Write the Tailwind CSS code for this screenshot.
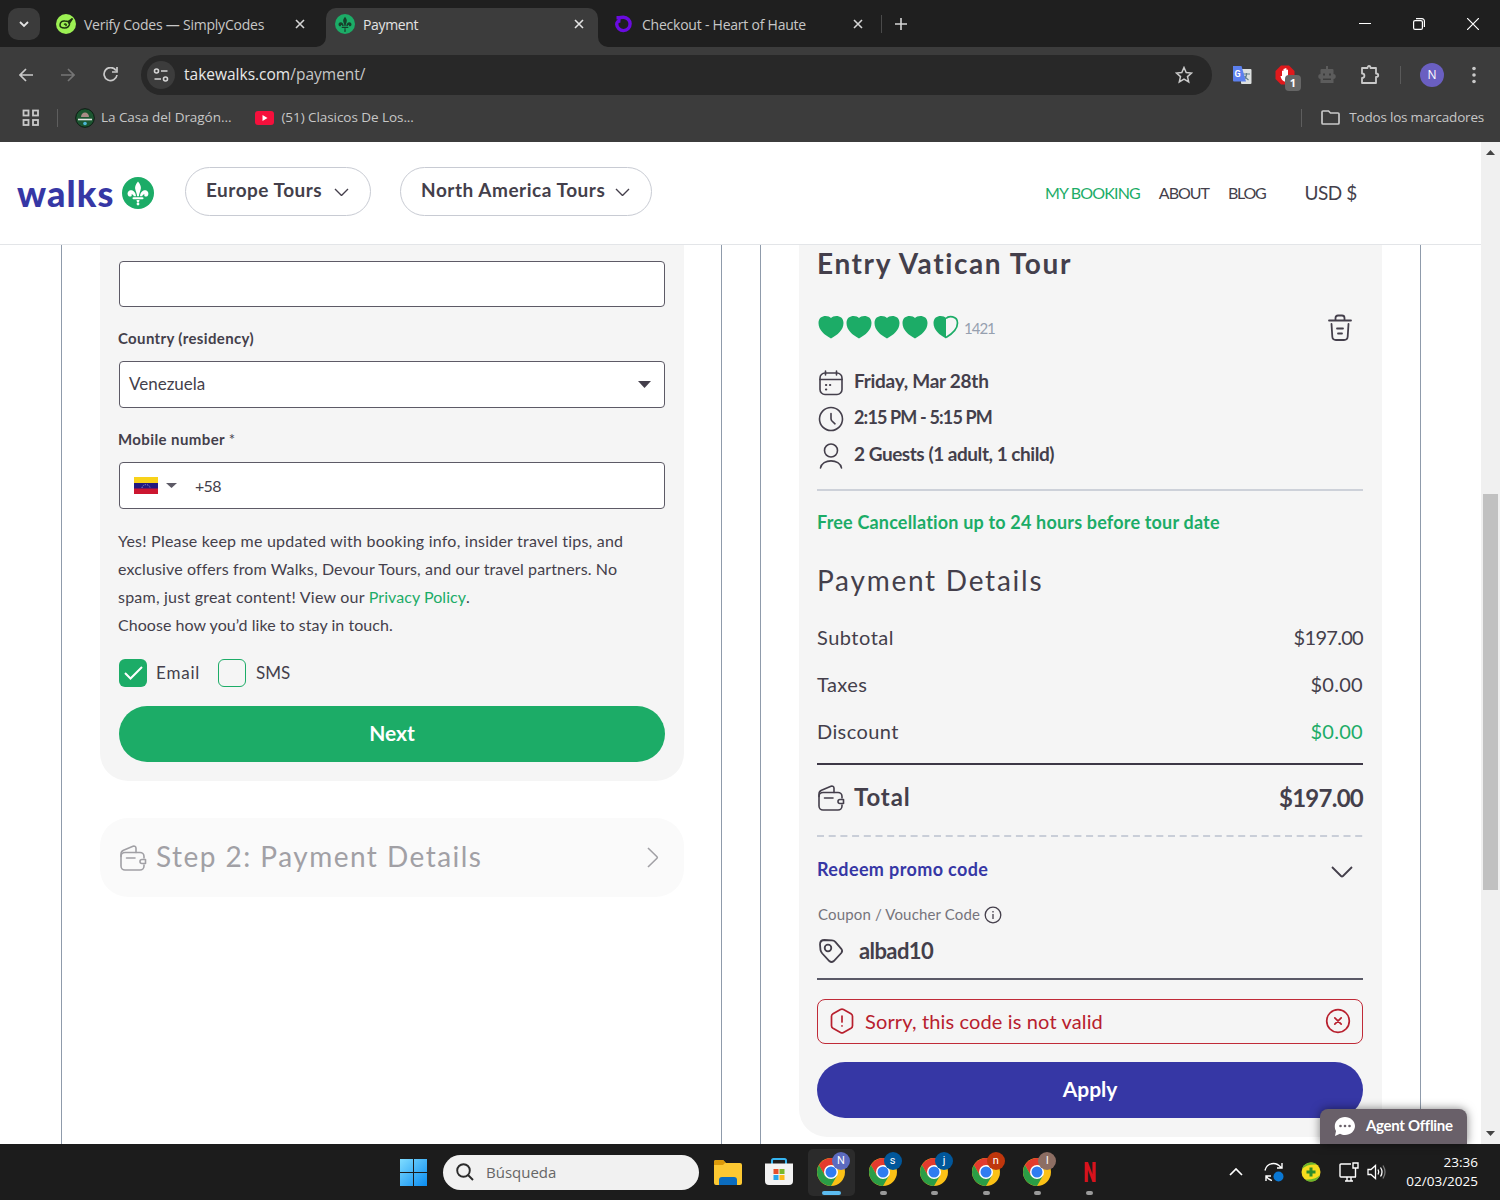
<!DOCTYPE html>
<html lang="en">

<head>
    <meta charset="UTF-8">
    <meta name="viewport" content="width=device-width, initial-scale=1.0">
    <title>Payment</title>
    <script src="https://cdn.jsdelivr.net/npm/@tailwindcss/browser@4"></script>
</head>

<body class="w-[1500px] h-[1200px] overflow-hidden flex flex-col bg-white font-['Open_Sans','Noto_Sans',sans-serif]">

    <!-- Shared icons -->
    <svg class="hidden">
        <symbol id="fleur" viewBox="0 0 32 32">
            <path d="M16 4.500c-2.600 3.200-3.600 5.600-2.500 8.700.7 2 1.400 3.700 1.600 6h1.800c.2-2.300.9-4 1.600-6 1.100-3.100.1-5.500-2.500-8.700z" />
            <path d="M14 19.200c-.3-3.600-2.300-6-4.900-6-2.300 0-3.900 2-3.400 4.200.4 1.700 1.900 2.500 3.300 2.100.9-.3 1-1.300.3-1.700.8-.9 2.200-.2 2.400 1.400zM18 19.200c.3-3.600 2.300-6 4.900-6 2.300 0 3.900 2 3.400 4.200-.4 1.700-1.900 2.500-3.300 2.100-.9-.3-1-1.300-.3-1.700-.8-.9-2.200-.2-2.400 1.400z" />
            <rect x="10.500" y="20.200" width="11" height="2" rx="1" />
            <path d="M14.500 23h3l-.5 2.200h-2z" />
            <circle cx="16" cy="27" r="1.400" />
        </symbol>
        <symbol id="heart" viewBox="0 0 28 26">
            <path d="M14 4C11.500.8 1.500.4 1.500 9c0 7 6 12 12.500 15.500C20.500 21 26.500 16 26.500 9 26.500.4 16.500.8 14 4z" />
        </symbol>
        <symbol id="wallet" viewBox="0 0 28 28">
            <g fill="none" stroke="currentColor" stroke-width="1.600" stroke-linecap="round" stroke-linejoin="round">
                <path d="M25 14v-1.500a4 4 0 0 0-4-4H6a4 4 0 0 0-4 4V22a4 4 0 0 0 4 4h15a4 4 0 0 0 4-4v-1" />
                <path d="M2 12.500V10c0-2 .8-3 2.500-3.800L14 2.300c1.500-.6 3 .3 3 2V8.500M7.500 14H16" />
                <path d="M26.500 15.500v4h-3.500a2 2 0 0 1 0-4z" />
            </g>
        </symbol>
        <symbol id="chrome" viewBox="0 0 28 28">
            <circle cx="14" cy="14" r="14" fill="#fbc116" />
            <path d="M1.880 7 7.940 17.500 14 14 14 7 26.120 7A14 14 0 0 0 1.880 7z" fill="#e33b2e" />
            <path d="M1.880 7A14 14 0 0 0 14 28l6.060-10.500L14 14l-6.060 3.500z" fill="#2a9d46" />
            <circle cx="14" cy="14" r="7" fill="#fff" />
            <circle cx="14" cy="14" r="5.500" fill="#2f7cf0" />
        </symbol>
        <symbol id="x" viewBox="0 0 10 10">
            <path d="M1 1l8 8M9 1L1 9" fill="none" stroke="currentColor" stroke-width="1.600" />
        </symbol>
    </svg>

    <!-- Tab strip -->
    <div class="h-[47px] shrink-0 bg-[#1f1f1f] flex items-end text-[14px] text-[#c7c7c7]">
        <div class="ml-2 mb-[7px] size-8 rounded-[10px] bg-[#3b3b3b] flex items-center justify-center">
            <svg class="w-[10px] h-[7px]" viewBox="0 0 10 7" fill="none" stroke="#e3e3e3" stroke-width="1.800"><path d="M1 1l4 4 4-4" /></svg>
        </div>
        <div class="h-[39px] w-[286px] pl-4 pr-[21px] pb-[7px] flex items-center">
            <svg class="size-5 shrink-0" viewBox="0 0 20 20"><circle cx="10" cy="10" r="10" fill="#9cf053" /><path d="M4 11c0-3 2.500-4.500 5-4l3 .5 4.500-3-3 4.500c.5 3-2 5-5 5S4 13.500 4 11zM8 10.500c2-1.500 3 .5 1.500 1.500M12 9l2-1" fill="none" stroke="#1e3310" stroke-width="1.500" /></svg>
            <span class="ml-2 whitespace-nowrap tracking-[-0.23px]">Verify Codes — SimplyCodes</span>
            <svg class="ml-auto size-[10px] text-[#d5d5d5]"><use href="#x" /></svg>
        </div>
        <div class="relative h-[39px] w-[272px] pl-[9px] pr-[14px] pb-[7px] rounded-t-[10px] bg-[#3c3c3c] text-[#e3e3e3] flex items-center">
            <svg class="absolute left-[-10px] bottom-0 size-[10px]" viewBox="0 0 10 10"><path d="M10 0v10H0A10 10 0 0 0 10 0z" fill="#3c3c3c" /></svg>
            <svg class="absolute right-[-10px] bottom-0 size-[10px]" viewBox="0 0 10 10"><path d="M0 0v10h10A10 10 0 0 1 0 0z" fill="#3c3c3c" /></svg>
            <svg class="size-5 shrink-0" viewBox="0 0 32 32"><circle cx="16" cy="16" r="16" fill="#1cac67" /><use href="#fleur" fill="#17402c" /></svg>
            <span class="ml-2 whitespace-nowrap tracking-[-0.35px]">Payment</span>
            <svg class="ml-auto size-[10px]"><use href="#x" /></svg>
        </div>
        <div class="h-[39px] w-[283px] pl-[17px] pr-[18px] pb-[7px] flex items-center">
            <svg class="size-[18px] shrink-0" viewBox="0 0 18 18" fill="none" stroke="#6a0be0" stroke-width="3.400"><path d="M1.500 2.700h3q1.500-.5 4-.5a6.700 6.700 0 1 1-6.800 7c0-2.200 1.300-3.500 3.800-3.200" /></svg>
            <span class="ml-[9px] whitespace-nowrap tracking-[-0.23px]">Checkout - Heart of Haute</span>
            <svg class="ml-auto size-[10px] text-[#d5d5d5]"><use href="#x" /></svg>
        </div>
        <div class="w-px h-[18px] mb-[14px] bg-[#4a4a4a]"></div>
        <svg class="ml-[13px] mb-[17px] size-3" viewBox="0 0 12 12" stroke="#d5d5d5" stroke-width="1.600"><path d="M6 0v12M0 6h12" /></svg>
        <div class="ml-auto mr-[21px] mb-[17px] flex items-center gap-[42px] text-white">
            <svg class="w-3 h-3" viewBox="0 0 12 12" stroke="#fff" stroke-width="1"><path d="M0 5.500h12" /></svg>
            <svg class="size-3" viewBox="0 0 12 12" fill="none" stroke="#fff" stroke-width="1.200"><rect x=".6" y="2.600" width="8.800" height="8.800" rx="1.500" /><path d="M3 .6h6a2.400 2.400 0 0 1 2.400 2.400v6" /></svg>
            <svg class="size-3" viewBox="0 0 12 12" stroke="#fff" stroke-width="1.200"><path d="M0 0l12 12M12 0L0 12" /></svg>
        </div>
    </div>

    <!-- Toolbar -->
    <div class="h-[55px] shrink-0 bg-[#3c3c3c] flex items-center pl-[19px] pr-[24px] text-[#c7c7c7]">
        <svg class="w-[14px] h-[14px]" viewBox="0 0 14 14" fill="none" stroke="#c9c9c9" stroke-width="1.700"><path d="M14 7H1M7 1L1 7l6 6" /></svg>
        <svg class="ml-7 w-[14px] h-[14px]" viewBox="0 0 14 14" fill="none" stroke="#757575" stroke-width="1.700"><path d="M0 7h13M7 1l6 6-6 6" /></svg>
        <svg class="ml-7 w-[15px] h-[15px]" viewBox="0 0 15 15" fill="none" stroke="#c9c9c9" stroke-width="1.700"><path d="M13 3.500A6.500 6.500 0 1 0 14 8M14 0v5H9" /></svg>
        <div class="ml-[23px] w-[1071px] h-10 rounded-full bg-[#282828] flex items-center pl-[6px] pr-[19px]">
            <div class="size-7 rounded-full bg-[#3c3c3c] flex items-center justify-center">
                <svg class="w-4 h-[14px]" viewBox="0 0 16 14" fill="none" stroke="#d5d5d5" stroke-width="1.600"><circle cx="3.500" cy="3" r="2" /><path d="M8 3h6.500M1.500 11H8" /><circle cx="12.500" cy="11" r="2" /></svg>
            </div>
            <span class="ml-[9px] text-[15.5px] text-[#c7c7c7] whitespace-nowrap"><span class="text-[#e8e8e8]">takewalks.com</span>/payment/</span>
            <svg class="ml-auto size-[18px]" viewBox="0 0 18 18" fill="none" stroke="#c9c9c9" stroke-width="1.500"><path d="M9 1.500l2.200 5 5.300.5-4 3.600 1.200 5.300L9 13.100l-4.700 2.800 1.200-5.300-4-3.600 5.300-.5z" /></svg>
        </div>
        <svg class="ml-[20px] size-5" viewBox="0 0 20 20"><rect x="9" y="4" width="10.500" height="15" rx="1" fill="#dde0e0" /><path d="M11 9h7M14.500 8v1.500c0 3-3 5-3 5M12.500 11c1 2 4 4 4 4" stroke="#607d8b" stroke-width="1.200" fill="none" /><path d="M1 1h8.500l4.500 15.500H2a1 1 0 0 1-1-1z" fill="#5c80ee" /><text x="2.500" y="12" font-size="9" font-weight="700" fill="#fff" font-family="Roboto">G</text></svg>
        <div class="relative ml-[23px] w-5 h-5">
            <svg class="size-5" viewBox="0 0 20 20"><path d="M6 .5h8L19.500 6v8L14 19.500H6L.5 14V6z" fill="#e0191c" /><path d="M7 11V6q1-1 1.500 0V4q1-1 1.500 0V3.500q1-1 1.500 0V5q1-1 1.500 0v7c0 3-1 4.500-3 4.500S6 14 5.500 11z" fill="#fff" /></svg>
            <span class="absolute left-[10px] top-[10px] w-4 h-4 rounded-[4px] bg-[#666] text-white text-[11px] leading-4 font-bold text-center">1</span>
        </div>
        <svg class="ml-[22px] w-5 h-5" viewBox="0 0 20 20" fill="#5c5c5c"><path d="M9 1h2v3h4.500a1 1 0 0 1 1 1v4c3 0 3 5 0 5v4h-13v-4c-3 0-3-5 0-5V5a1 1 0 0 1 1-1H9z" /><path d="M6 8.500h2v2H6zM12 8.500h2v2h-2zM6 13.500h8V15H6z" fill="#3c3c3c" /></svg>
        <svg class="ml-[23px] w-5 h-5" viewBox="0 0 20 20" fill="none" stroke="#c9c9c9" stroke-width="1.800"><path d="M2 3h5.500c0-2.700 3-2.700 3 0H16v5.500c3 0 3 3.500 0 3.500v6H2v-5c3.200 0 3.200-4.500 0-4.500z" stroke-linejoin="round" /></svg>
        <div class="ml-5 w-px h-[18px] bg-[#5a5a5a]"></div>
        <div class="ml-[19px] size-6 rounded-full bg-[#6a5fc1] text-white text-[12px] flex items-center justify-center">N</div>
        <svg class="ml-auto w-[4px] h-[18px]" viewBox="0 0 4 18" fill="#c9c9c9"><circle cx="2" cy="2.500" r="1.800" /><circle cx="2" cy="9" r="1.800" /><circle cx="2" cy="15.500" r="1.800" /></svg>
    </div>

    <!-- Bookmarks -->
    <div class="h-10 shrink-0 bg-[#3c3c3c] flex items-center pb-[9px] pl-[22px] pr-4 text-[13.5px] text-[#c7c7c7] whitespace-nowrap">
        <svg class="size-[18px]" viewBox="0 0 18 18" fill="none" stroke="#c9c9c9" stroke-width="1.800"><rect x="1.500" y="1.500" width="5" height="5" /><rect x="11" y="1.500" width="5" height="5" /><rect x="1.500" y="11" width="5" height="5" /><rect x="11" y="11" width="5" height="5" /></svg>
        <div class="ml-[17px] w-px h-[18px] bg-[#5e5e5e]"></div>
        <svg class="ml-[17px] size-5" viewBox="0 0 20 20"><circle cx="10" cy="10" r="9.300" fill="#1c5530" stroke="#0c1c12" /><path d="M6 9c0-6 8-6 8 0z" fill="#a98b86" /><path d="M3 11.500h14" stroke="#e5e5e5" stroke-width="1.600" /><circle cx="10" cy="15.500" r="1.800" fill="#4db8d8" /></svg>
        <span class="ml-[6px] tracking-[-0.05px]">La Casa del Dragón...</span>
        <svg class="ml-[24px] w-[19px] h-[14px]" viewBox="0 0 19 14"><rect width="19" height="14" rx="3" fill="#f5103c" /><path d="M7.500 4v6l5-3z" fill="#fff" /></svg>
        <span class="ml-[7px] tracking-[-0.06px]">(51) Clasicos De Los...</span>
        <div class="ml-auto w-px h-[18px] bg-[#5e5e5e]"></div>
        <svg class="ml-[19px] w-[19px] h-[15px]" viewBox="0 0 19 15" fill="none" stroke="#c9c9c9" stroke-width="1.700"><path d="M1 2.500V13c0 .6.400 1 1 1h15c.6 0 1-.4 1-1V4c0-.6-.4-1-1-1H9.500l-2-2H2c-.6 0-1 .4-1 1z" /></svg>
        <span class="ml-[9px] tracking-[-0.2px]">Todos los marcadores</span>
    </div>

    <!-- Page -->
    <div class="relative h-[1002px] shrink-0 flex font-['Lato',sans-serif] text-[#443f4b]">
        <div class="w-[1481px] flex flex-col">
            <header class="h-[103px] shrink-0 border-b border-[#e3e5e8] flex items-center pl-[17px] pr-[124px]">
                <span class="w-[98px] text-[36px] leading-none font-black tracking-[1.1px] text-[#3637a5]">walks</span>
                <svg class="ml-[7px] size-[32px]" viewBox="0 0 32 32"><circle cx="16" cy="16" r="16" fill="#1cac67" /><use href="#fleur" fill="#fff" /></svg>
                <div class="ml-[31px] mb-[3px] w-[186px] h-[49px] rounded-full border border-[#c8cbd3] flex items-center pl-5 pr-[21px] pb-[2px]">
                    <span class="text-[19px] font-bold whitespace-nowrap tracking-[0.5px]">Europe Tours</span>
                    <svg class="ml-auto mt-[3px] w-[15px] h-[9px]" viewBox="0 0 15 9" fill="none" stroke="#443f4b" stroke-width="1.400"><path d="M1 1l6 6q.5.500 1 0l6-6" /></svg>
                </div>
                <div class="ml-[29px] mb-[3px] w-[252px] h-[49px] rounded-full border border-[#c8cbd3] flex items-center pl-5 pr-[21px] pb-[2px]">
                    <span class="text-[19px] font-bold whitespace-nowrap tracking-[0.53px]">North America Tours</span>
                    <svg class="ml-auto mt-[3px] w-[15px] h-[9px]" viewBox="0 0 15 9" fill="none" stroke="#443f4b" stroke-width="1.400"><path d="M1 1l6 6q.5.500 1 0l6-6" /></svg>
                </div>
                <nav class="ml-auto flex items-center text-[16px] whitespace-nowrap">
                    <a class="text-[#1cac67] tracking-[-0.85px]">MY BOOKING</a>
                    <a class="ml-[19px] tracking-[-1px]">ABOUT</a>
                    <a class="ml-[19px] tracking-[-1.3px]">BLOG</a>
                    <a class="ml-[39px] text-[19px] tracking-[-0.4px]">USD $</a>
                </nav>
            </header>

            <main class="flex-1 flex pl-[61px] gap-[38px]">
                <!-- Traveler form -->
                <section class="w-[661px] border-x border-[#8f9bab] pl-[38px] pr-[37px]">
                    <div class="h-[536px] rounded-b-[28px] bg-[#f5f5f5] pl-[19px] pr-[19px] pt-[16px] flex flex-col">
                        <div class="h-[46px] shrink-0 rounded-[4px] border border-[#5d5a66] bg-white"></div>
                        <label class="-ml-px h-[54px] shrink-0 pt-[21px] text-[15px] leading-5 font-bold tracking-[0.35px]">Country (residency)</label>
                        <div class="h-[47px] shrink-0 rounded-[4px] border border-[#5d5a66] bg-white flex items-center pl-[9px] pr-[13px] pb-px text-[17px]">
                            <span>Venezuela</span>
                            <svg class="ml-auto w-[13px] h-[7px]" viewBox="0 0 13 7" fill="#443f4b"><path d="M0 0h13L6.500 7z" /></svg>
                        </div>
                        <label class="-ml-px h-[54px] shrink-0 pt-[21px] text-[15px] leading-5 font-bold tracking-[0.4px]">Mobile number <span class="font-normal">*</span></label>
                        <div class="h-[47px] shrink-0 rounded-[4px] border border-[#5d5a66] bg-white flex items-center pl-[14px] text-[16px]">
                            <svg class="w-6 h-[17px]" viewBox="0 0 24 17"><path fill="#f8d21a" d="M0 0h24v6H0z" /><path fill="#22197f" d="M0 6h24v6H0z" /><path fill="#cc1630" d="M0 11.500h24V17H0z" /><path d="M8 11c0-4.500 8-4.500 8 0" fill="none" stroke="#8f8fd0" stroke-width=".9" stroke-dasharray="1.200 1" /></svg>
                            <svg class="ml-2 w-[11px] h-[5px]" viewBox="0 0 11 5" fill="#5d5a66"><path d="M0 0h11L5.500 5z" /></svg>
                            <span class="ml-[18px] tracking-[-0.7px] pt-px">+58</span>
                        </div>
                        <p class="mt-[18px] -ml-px text-[16px] leading-7 whitespace-nowrap">
                            <span class="tracking-[0.22px]">Yes! Please keep me updated with booking info, insider travel tips, and</span><br>
                            <span class="tracking-[0.13px]">exclusive offers from Walks, Devour Tours, and our travel partners. No</span><br>
                            <span class="tracking-[0.22px]">spam, just great content! View our </span><a class="text-[#1cac67] tracking-[0.06px]">Privacy Policy</a>.<br>
                            <span class="tracking-[0.05px]">Choose how you’d like to stay in touch.</span>
                        </p>
                        <div class="mt-[20px] h-7 flex items-center text-[17px]">
                            <div class="size-7 rounded-[6px] bg-[#1cac67] flex items-center justify-center">
                                <svg class="w-[19px] h-[14px]" viewBox="0 0 19 14" fill="none" stroke="#fff" stroke-width="2"><path d="M1 7l5.500 5.500L18 1" /></svg>
                            </div>
                            <span class="ml-[9px] tracking-[0.8px]">Email</span>
                            <div class="ml-[18px] size-7 rounded-[6px] border border-[#1cac67]"></div>
                            <span class="ml-[10px]">SMS</span>
                        </div>
                        <button class="mt-[19px] h-14 shrink-0 rounded-full bg-[#1cac67] text-white text-[21px] font-bold pb-[3px]">Next</button>
                    </div>
                    <div class="mt-[37px] h-[79px] rounded-[28px] bg-[#fafafa] text-[#a1a0a5] flex items-center pl-[19px] pr-[25px]">
                        <svg class="size-7"><use href="#wallet" /></svg>
                        <span class="ml-[9px] pb-[3px] text-[28px] tracking-[1.47px]">Step 2: Payment Details</span>
                        <svg class="ml-auto w-[12px] h-[21px]" viewBox="0 0 12 21" fill="none" stroke="currentColor" stroke-width="1.600"><path d="M1 1l9 8.800q.7.700 0 1.400L1 20" /></svg>
                    </div>
                </section>

                <!-- Order summary -->
                <section class="w-[661px] border-x border-[#8f9bab] px-[38px]">
                    <div class="h-[892px] rounded-b-[28px] bg-[#f5f5f5] pl-[18px] pr-[19px] flex flex-col">
                        <h2 class="h-[37px] text-[28px] leading-[36px] font-bold tracking-[1.6px]">Entry Vatican Tour</h2>
                        <div class="mt-[27px] h-9 flex items-center">
                            <svg class="w-7 h-[26px] text-[#1cac67]" fill="currentColor"><use href="#heart" /></svg>
                            <svg class="w-7 h-[26px] text-[#1cac67]" fill="currentColor"><use href="#heart" /></svg>
                            <svg class="w-7 h-[26px] text-[#1cac67]" fill="currentColor"><use href="#heart" /></svg>
                            <svg class="w-7 h-[26px] text-[#1cac67]" fill="currentColor"><use href="#heart" /></svg>
                            <svg class="ml-[3px] w-7 h-[26px]" viewBox="0 0 28 26"><path d="M14 4C11.500.8 1.500.4 1.500 9c0 7 6 12 12.500 15.500z" fill="#1cac67" /><path d="M14 4.500C16.500 1.500 25.500 1.500 25.500 9c0 6.500-5.500 11-11.500 14.500" fill="none" stroke="#1cac67" stroke-width="1.700" /></svg>
                            <span class="ml-[4px] pt-[2px] text-[15px] tracking-[-1px] text-[#96a0af]">1421</span>
                            <svg class="ml-auto mr-[11px] w-6 h-[27px]" viewBox="0 0 24 27" fill="none" stroke="#443f4b" stroke-width="1.800" stroke-linecap="round"><path d="M1 6.500h22M7.500 6V4q0-2.500 2.500-2.500h4q2.500 0 2.500 2.500v2M3.500 10l.8 12.500Q4.500 26 8 26h8q3.500 0 3.700-3.500L20.500 10M9 14.500h6M10 19.500h4" /></svg>
                        </div>
                        <div class="mt-[18px] flex flex-col text-[19px] font-bold">
                            <div class="h-[36.5px] flex items-center">
                                <svg class="size-7 mt-[4px]" viewBox="0 0 28 28" fill="none" stroke="#443f4b" stroke-width="1.600" stroke-linecap="round"><rect x="3" y="4" width="22" height="21.500" rx="5" /><path d="M3 10.500h22M8.500 2v4M19.500 2v4" /><path d="M9 16h.2M13 16h.2M9 20.500h.2" stroke-width="2.200" /></svg>
                                <span class="ml-[9px] tracking-[-0.27px]">Friday, Mar 28th</span>
                            </div>
                            <div class="h-[36.5px] flex items-center">
                                <svg class="size-7 mt-[3px]" viewBox="0 0 28 28" fill="none" stroke="#443f4b" stroke-width="1.600" stroke-linecap="round"><circle cx="14" cy="14" r="11.500" /><path d="M14 8.500v5q0 1.500 1 2.500l3 2.800" /></svg>
                                <span class="ml-[9px] text-[18px] tracking-[-0.85px]">2:15 PM - 5:15 PM</span>
                            </div>
                            <div class="h-[36.5px] flex items-center">
                                <svg class="size-7 mt-[4px]" viewBox="0 0 28 28" fill="none" stroke="#443f4b" stroke-width="1.600" stroke-linecap="round"><circle cx="14" cy="8.500" r="6.500" /><path d="M3.500 26c1.500-9.500 19.500-9.500 21 0" /></svg>
                                <span class="ml-[9px] tracking-[-0.46px]">2 Guests (1 adult, 1 child)</span>
                            </div>
                        </div>
                        <div class="mt-4 h-[2px] shrink-0 bg-[#cdd1d9]"></div>
                        <div class="mt-[17px] h-[28px] text-[18px] leading-[28px] font-bold tracking-[0.18px] text-[#1cac67]">Free Cancellation up to 24 hours before tour date</div>
                        <h3 class="mt-[25px] h-[40px] text-[28px] leading-[39px] tracking-[1.75px]">Payment Details</h3>
                        <div class="mt-[13px] flex flex-col text-[20px]">
                            <div class="h-[47px] flex items-center justify-between"><span class="tracking-[0.5px]">Subtotal</span><span class="tracking-[-0.7px]">$197.00</span></div>
                            <div class="h-[47px] flex items-center justify-between"><span class="tracking-[0.4px]">Taxes</span><span class="tracking-[0.3px]">$0.00</span></div>
                            <div class="h-[47px] flex items-center justify-between"><span class="tracking-[0.4px]">Discount</span><span class="tracking-[0.3px] text-[#1cac67]">$0.00</span></div>
                        </div>
                        <div class="mt-[8px] h-[2px] shrink-0 bg-[#3d3846]"></div>
                        <div class="h-[70px] pb-[3px] flex items-center text-[24px] font-bold">
                            <svg class="size-7"><use href="#wallet" /></svg>
                            <span class="ml-[9px] pb-[2px] tracking-[0.9px]">Total</span>
                            <span class="ml-auto pb-[1px] tracking-[-0.75px]">$197.00</span>
                        </div>
                        <svg class="h-[2px] w-full shrink-0"><path d="M0 1h546" stroke="#c9ced8" stroke-width="2" stroke-dasharray="7 4.700" /></svg>
                        <div class="mt-[15px] h-[36px] flex items-center text-[18px] font-bold text-[#3637a5]">
                            <span class="tracking-[0.37px]">Redeem promo code</span>
                            <svg class="ml-auto mr-[10px] mt-1 w-[22px] h-[12px]" viewBox="0 0 22 12" fill="none" stroke="#443f4b" stroke-width="1.800"><path d="M1 1l9 9q1 1 2 0l9-9" /></svg>
                        </div>
                        <div class="mt-[15px] pl-[1px] h-6 flex items-center text-[15px] text-[#76747c]">
                            <span class="tracking-[0.15px]">Coupon / Voucher Code</span>
                            <svg class="ml-1 size-[18px]" viewBox="0 0 18 18" fill="none" stroke="#443f4b" stroke-width="1.300"><circle cx="9" cy="9" r="7.800" /><path d="M9 8v5M9 5v1.500" /></svg>
                        </div>
                        <div class="h-[50px] flex items-center pb-[2px] text-[22px] font-bold">
                            <svg class="w-7 h-7" viewBox="0 0 28 28" fill="none" stroke="#443f4b" stroke-width="1.800"><path d="M3 7.500Q3 3 7.500 3l7.500.3q2 .1 3.300 1.500l6 7q1.700 2.200 0 4.200l-7.500 8q-2.300 2-4.500 0l-7-7.500Q4 15 3.500 13z" /><circle cx="11" cy="11" r="3.300" /></svg>
                            <span class="ml-[14px] tracking-[-0.6px]">albad10</span>
                        </div>
                        <div class="mt-[1px] h-[2px] shrink-0 bg-[#5a5967]"></div>
                        <div class="mt-[19px] h-[45px] shrink-0 rounded-[8px] border border-[#c02b38] text-[#b8202e] flex items-center px-[11px] text-[20px]">
                            <svg class="w-[26px] h-[26px]" viewBox="0 0 26 26" fill="none" stroke="currentColor" stroke-width="1.700" stroke-linecap="round"><path d="M11.500 1.500q1.500-.8 3 0l7.500 4.200q1.500.9 1.500 2.600v9.400q0 1.700-1.500 2.600l-7.500 4.200q-1.500.8-3 0L4 20.300q-1.500-.9-1.500-2.600V8.300q0-1.700 1.500-2.600zM13 8v6M13 17.800v.2" /></svg>
                            <span class="ml-[10px] pb-px tracking-[0.14px]">Sorry, this code is not valid</span>
                            <svg class="ml-auto size-[26px]" viewBox="0 0 26 26" fill="none" stroke="currentColor" stroke-width="1.700" stroke-linecap="round"><circle cx="13" cy="13" r="11.300" /><path d="M9.800 9.800l6.400 6.400M16.200 9.800l-6.400 6.400" /></svg>
                        </div>
                        <button class="mt-[18px] h-14 shrink-0 rounded-full bg-[#3637a5] text-white text-[21px] font-bold pb-[2px]">Apply</button>
                    </div>
                </section>
            </main>
        </div>

        <!-- Scrollbar -->
        <div class="w-[19px] bg-[#f0f0f0] flex flex-col items-center">
            <svg class="mt-2 w-[9px] h-[5px] shrink-0" viewBox="0 0 9 5" fill="#444"><path d="M0 5h9L4.500 0z" /></svg>
            <div class="mt-[339px] w-[15px] h-[396px] bg-[#c1c1c1]"></div>
            <svg class="mt-auto mb-2 w-[9px] h-[5px] shrink-0" viewBox="0 0 9 5" fill="#444"><path d="M0 0h9L4.500 5z" /></svg>
        </div>

        <!-- Chat widget -->
        <div class="absolute right-[33px] bottom-0 w-[147px] h-[35px] rounded-t-[8px] bg-[#696069] text-white shadow-[0_0_10px_rgba(0,0,0,0.5)] flex items-center pl-[14px] text-[15px] font-bold">
            <svg class="w-[21px] h-[19px]" viewBox="0 0 21 19"><path d="M11 0c5.500 0 10 4 10 9s-4.500 9-10 9c-2 0-3.500-.4-5-1.200L1 19l1-5C1 12.500.800 11 .8 9c0-5 4.700-9 10.200-9z" fill="#fff" /><g fill="#696069"><circle cx="6.500" cy="9" r="1.300" /><circle cx="11" cy="9" r="1.300" /><circle cx="15.500" cy="9" r="1.300" /></g></svg>
            <span class="ml-[11px] pb-[2px] whitespace-nowrap tracking-[-0.3px]">Agent Offline</span>
        </div>
    </div>

    <!-- Taskbar -->
    <div class="h-14 shrink-0 bg-[#1c1c1c] flex items-center pl-[400px] pr-[22px] text-white">
        <svg class="size-[27px] shrink-0" viewBox="0 0 27 27"><defs><linearGradient id="win" x1="0" y1="0" x2="1" y2="1"><stop stop-color="#7fdcff" /><stop offset="1" stop-color="#0a8cf0" /></linearGradient></defs><path d="M0 0h13v13H0zM14 0h13v13H14zM0 14h13v13H0zM14 14h13v13H14z" fill="url(#win)" /></svg>
        <div class="ml-4 w-[256px] h-[35px] rounded-full bg-[#f1f1f1] flex items-center pl-[13px] text-[15px] text-[#666]">
            <svg class="size-[18px]" viewBox="0 0 18 18" fill="none" stroke="#2b2b2b" stroke-width="1.900"><circle cx="7.500" cy="7.500" r="6.300" /><path d="M12 12l5 5" /></svg>
            <span class="ml-3">Búsqueda</span>
        </div>
        <svg class="ml-[15px] w-7 h-[25px]" viewBox="0 0 28 25"><path d="M0 2q0-2 2-2h7l3 3h14q2 0 2 2v18q0 2-2 2H2q-2 0-2-2z" fill="#fcc832" /><path d="M0 2q0-2 2-2h7l2.500 2.500L9 5H0z" fill="#dc9a0a" /><path d="M5 25v-5q0-3 3-3h12q3 0 3 3v5z" fill="#0b6cbf" /></svg>
        <svg class="ml-[23px] w-7 h-[28px]" viewBox="0 0 28 28"><path d="M7 6V2.500Q7 1 8.500 1h11Q21 1 21 2.500V6" fill="none" stroke="#35b4f0" stroke-width="2" /><path d="M0 5.500h28V23q0 4-4 4H4q-4 0-4-4z" fill="#f2f2f2" /><path d="M8.500 11h5v5h-5z" fill="#e8502a" /><path d="M14.500 11h5v5h-5z" fill="#7ab82c" /><path d="M8.500 17h5v5h-5z" fill="#28a5ec" /><path d="M14.500 17h5v5h-5z" fill="#fbb91a" /></svg>
        <div class="ml-[15px] flex gap-[4.6px] text-[11px] leading-[18px] text-center font-['Roboto',sans-serif]">
            <div class="relative w-[47px] h-[47px] rounded-[5px] bg-[#2b2b2b]">
                <svg class="absolute left-[9px] top-[9px] size-7"><use href="#chrome" /></svg>
                <span class="absolute left-[24px] top-[3px] size-[18px] rounded-full bg-[#5c6bc0]">N</span>
                <i class="absolute left-[14px] bottom-[1px] w-[19px] h-[4px] rounded-full bg-[#5cbcf0]"></i>
            </div>
            <div class="relative w-[47px] h-[47px]">
                <svg class="absolute left-[9px] top-[9px] size-7"><use href="#chrome" /></svg>
                <span class="absolute left-[24px] top-[3px] size-[18px] rounded-full bg-[#01579b]">s</span>
                <i class="absolute left-[20px] bottom-[1px] w-[7px] h-[4px] rounded-full bg-[#9a9a9a]"></i>
            </div>
            <div class="relative w-[47px] h-[47px]">
                <svg class="absolute left-[9px] top-[9px] size-7"><use href="#chrome" /></svg>
                <span class="absolute left-[24px] top-[3px] size-[18px] rounded-full bg-[#01579b]">j</span>
                <i class="absolute left-[20px] bottom-[1px] w-[7px] h-[4px] rounded-full bg-[#9a9a9a]"></i>
            </div>
            <div class="relative w-[47px] h-[47px]">
                <svg class="absolute left-[9px] top-[9px] size-7"><use href="#chrome" /></svg>
                <span class="absolute left-[24px] top-[3px] size-[18px] rounded-full bg-[#bf360c]">n</span>
                <i class="absolute left-[20px] bottom-[1px] w-[7px] h-[4px] rounded-full bg-[#9a9a9a]"></i>
            </div>
            <div class="relative w-[47px] h-[47px]">
                <svg class="absolute left-[9px] top-[9px] size-7"><use href="#chrome" /></svg>
                <span class="absolute left-[24px] top-[3px] size-[18px] rounded-full bg-[#8d6e63]">l</span>
                <i class="absolute left-[20px] bottom-[1px] w-[7px] h-[4px] rounded-full bg-[#9a9a9a]"></i>
            </div>
            <div class="relative w-[47px] h-[47px] flex items-center justify-center">
                <span class="text-[28px] font-black text-[#d8121c] scale-x-[0.65] leading-none pt-[2px]">N</span>
                <i class="absolute left-[20px] bottom-[1px] w-[7px] h-[4px] rounded-full bg-[#9a9a9a]"></i>
            </div>
        </div>
        <svg class="ml-auto w-[14px] h-2" viewBox="0 0 14 8" fill="none" stroke="#fff" stroke-width="1.700"><path d="M1 7l6-6 6 6" /></svg>
        <svg class="ml-[21px] w-5 h-5" viewBox="0 0 20 20" fill="none" stroke="#fff" stroke-width="1.400"><path d="M1 8.500C2 4 5.500 1.500 9.500 1.500c3 0 5.500 1.500 7.500 4M18 1v5h-5M2 19v-5h5M2 14c1.500 2.500 3.500 4 6 4.500" /><circle cx="14.500" cy="14.500" r="5" fill="#0a78d4" stroke="none" /></svg>
        <svg class="ml-[17px] w-5 h-5" viewBox="0 0 20 20"><circle cx="10" cy="10" r="9.500" fill="#f5dc1e" /><path d="M1 7A9.500 9.500 0 0 1 16 2.500C10 2 5 3 1 7zM19 13a9.500 9.500 0 0 1-15 4.500c6 .5 11-.5 15-4.500z" fill="#6ab42d" /><path d="M10 5.500v9M5.500 10h9" stroke="#2e8b2a" stroke-width="3" /></svg>
        <svg class="ml-[18px] w-5 h-5" viewBox="0 0 20 20" fill="none" stroke="#fff" stroke-width="1.400"><path d="M12 2H2q-1 0-1 1v11q0 1 1 1h15M6 19h8M8 15v4M12 15v4M14 1h5v5h-5zM16.500 6v9" /></svg>
        <svg class="ml-2 w-[19px] h-4" viewBox="0 0 19 16" fill="none" stroke="#fff" stroke-width="1.300"><path d="M1 5.500v5h3l4.500 4v-13L4 5.500zM11 5.500q1.500 2.500 0 5M13.500 3.500q3 4.500 0 9" /><path d="M16 1.500q4 6.500 0 13" stroke="#777" /></svg>
        <div class="ml-[20px] text-[13.5px] leading-[19px] text-right tabular-nums">23:36<br>02/03/2025</div>
    </div>
</body>

</html>
